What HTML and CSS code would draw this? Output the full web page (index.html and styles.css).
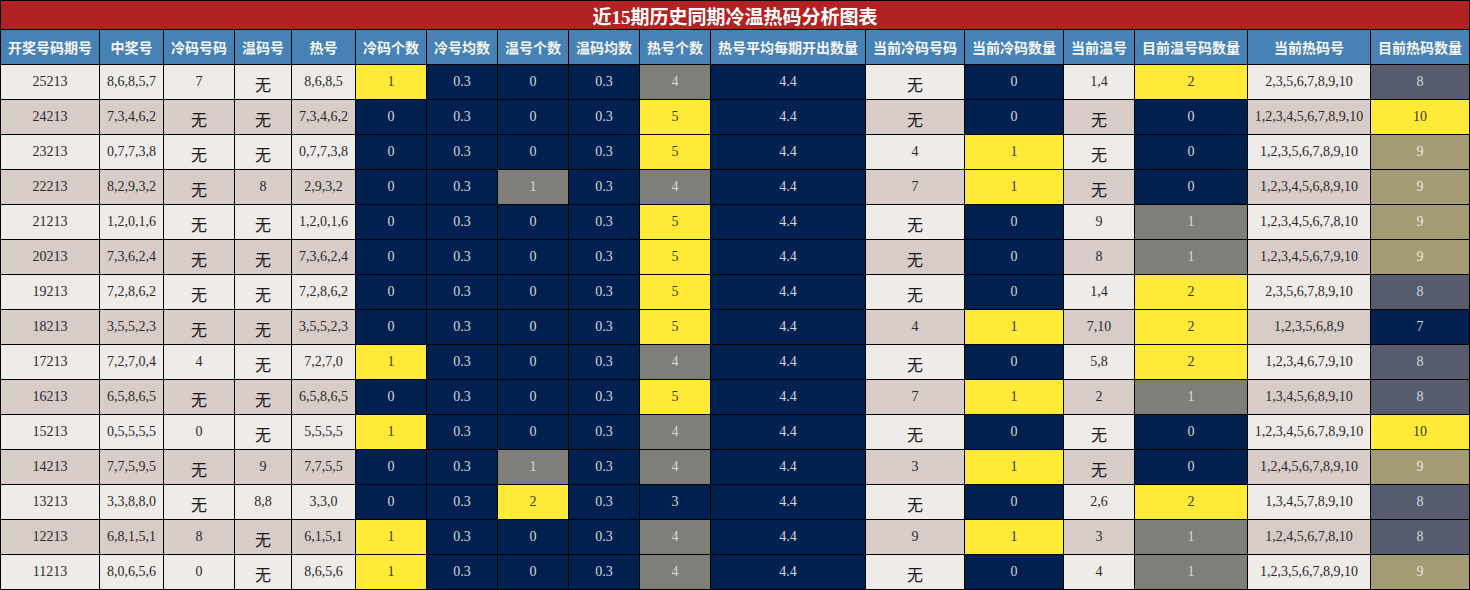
FILE: index.html
```html
<!DOCTYPE html>
<html lang="zh-CN">
<head>
<meta charset="utf-8">
<title>近15期历史同期冷温热码分析图表</title>
<link rel="stylesheet" href="styles.css">
</head>
<body>
<div class="sheet">
  <div class="title">近15期历史同期冷温热码分析图表</div>
  <div class="grid">
    <div class="row head">
      <div class="c">开奖号码期号</div><div class="c">中奖号</div><div class="c">冷码号码</div><div class="c">温码号</div><div class="c">热号</div><div class="c">冷码个数</div><div class="c">冷号均数</div><div class="c">温号个数</div><div class="c">温码均数</div><div class="c">热号个数</div><div class="c">热号平均每期开出数量</div><div class="c">当前冷码号码</div><div class="c">当前冷码数量</div><div class="c">当前温号</div><div class="c">目前温号码数量</div><div class="c">当前热码号</div><div class="c">目前热码数量</div>
    </div>
    <div class="row l">
      <div class="c">25213</div><div class="c">8,6,8,5,7</div><div class="c">7</div><div class="c w">无</div><div class="c">8,6,8,5</div><div class="c y">1</div><div class="c n">0.3</div><div class="c n">0</div><div class="c n">0.3</div><div class="c g">4</div><div class="c n">4.4</div><div class="c w">无</div><div class="c n">0</div><div class="c">1,4</div><div class="c y">2</div><div class="c">2,3,5,6,7,8,9,10</div><div class="c s">8</div>
    </div>
    <div class="row d">
      <div class="c">24213</div><div class="c">7,3,4,6,2</div><div class="c w">无</div><div class="c w">无</div><div class="c">7,3,4,6,2</div><div class="c n">0</div><div class="c n">0.3</div><div class="c n">0</div><div class="c n">0.3</div><div class="c y">5</div><div class="c n">4.4</div><div class="c w">无</div><div class="c n">0</div><div class="c w">无</div><div class="c n">0</div><div class="c">1,2,3,4,5,6,7,8,9,10</div><div class="c y">10</div>
    </div>
    <div class="row l">
      <div class="c">23213</div><div class="c">0,7,7,3,8</div><div class="c w">无</div><div class="c w">无</div><div class="c">0,7,7,3,8</div><div class="c n">0</div><div class="c n">0.3</div><div class="c n">0</div><div class="c n">0.3</div><div class="c y">5</div><div class="c n">4.4</div><div class="c">4</div><div class="c y">1</div><div class="c w">无</div><div class="c n">0</div><div class="c">1,2,3,5,6,7,8,9,10</div><div class="c o">9</div>
    </div>
    <div class="row d">
      <div class="c">22213</div><div class="c">8,2,9,3,2</div><div class="c w">无</div><div class="c">8</div><div class="c">2,9,3,2</div><div class="c n">0</div><div class="c n">0.3</div><div class="c g">1</div><div class="c n">0.3</div><div class="c g">4</div><div class="c n">4.4</div><div class="c">7</div><div class="c y">1</div><div class="c w">无</div><div class="c n">0</div><div class="c">1,2,3,4,5,6,8,9,10</div><div class="c o">9</div>
    </div>
    <div class="row l">
      <div class="c">21213</div><div class="c">1,2,0,1,6</div><div class="c w">无</div><div class="c w">无</div><div class="c">1,2,0,1,6</div><div class="c n">0</div><div class="c n">0.3</div><div class="c n">0</div><div class="c n">0.3</div><div class="c y">5</div><div class="c n">4.4</div><div class="c w">无</div><div class="c n">0</div><div class="c">9</div><div class="c g">1</div><div class="c">1,2,3,4,5,6,7,8,10</div><div class="c o">9</div>
    </div>
    <div class="row d">
      <div class="c">20213</div><div class="c">7,3,6,2,4</div><div class="c w">无</div><div class="c w">无</div><div class="c">7,3,6,2,4</div><div class="c n">0</div><div class="c n">0.3</div><div class="c n">0</div><div class="c n">0.3</div><div class="c y">5</div><div class="c n">4.4</div><div class="c w">无</div><div class="c n">0</div><div class="c">8</div><div class="c g">1</div><div class="c">1,2,3,4,5,6,7,9,10</div><div class="c o">9</div>
    </div>
    <div class="row l">
      <div class="c">19213</div><div class="c">7,2,8,6,2</div><div class="c w">无</div><div class="c w">无</div><div class="c">7,2,8,6,2</div><div class="c n">0</div><div class="c n">0.3</div><div class="c n">0</div><div class="c n">0.3</div><div class="c y">5</div><div class="c n">4.4</div><div class="c w">无</div><div class="c n">0</div><div class="c">1,4</div><div class="c y">2</div><div class="c">2,3,5,6,7,8,9,10</div><div class="c s">8</div>
    </div>
    <div class="row d">
      <div class="c">18213</div><div class="c">3,5,5,2,3</div><div class="c w">无</div><div class="c w">无</div><div class="c">3,5,5,2,3</div><div class="c n">0</div><div class="c n">0.3</div><div class="c n">0</div><div class="c n">0.3</div><div class="c y">5</div><div class="c n">4.4</div><div class="c">4</div><div class="c y">1</div><div class="c">7,10</div><div class="c y">2</div><div class="c">1,2,3,5,6,8,9</div><div class="c n">7</div>
    </div>
    <div class="row l">
      <div class="c">17213</div><div class="c">7,2,7,0,4</div><div class="c">4</div><div class="c w">无</div><div class="c">7,2,7,0</div><div class="c y">1</div><div class="c n">0.3</div><div class="c n">0</div><div class="c n">0.3</div><div class="c g">4</div><div class="c n">4.4</div><div class="c w">无</div><div class="c n">0</div><div class="c">5,8</div><div class="c y">2</div><div class="c">1,2,3,4,6,7,9,10</div><div class="c s">8</div>
    </div>
    <div class="row d">
      <div class="c">16213</div><div class="c">6,5,8,6,5</div><div class="c w">无</div><div class="c w">无</div><div class="c">6,5,8,6,5</div><div class="c n">0</div><div class="c n">0.3</div><div class="c n">0</div><div class="c n">0.3</div><div class="c y">5</div><div class="c n">4.4</div><div class="c">7</div><div class="c y">1</div><div class="c">2</div><div class="c g">1</div><div class="c">1,3,4,5,6,8,9,10</div><div class="c s">8</div>
    </div>
    <div class="row l">
      <div class="c">15213</div><div class="c">0,5,5,5,5</div><div class="c">0</div><div class="c w">无</div><div class="c">5,5,5,5</div><div class="c y">1</div><div class="c n">0.3</div><div class="c n">0</div><div class="c n">0.3</div><div class="c g">4</div><div class="c n">4.4</div><div class="c w">无</div><div class="c n">0</div><div class="c w">无</div><div class="c n">0</div><div class="c">1,2,3,4,5,6,7,8,9,10</div><div class="c y">10</div>
    </div>
    <div class="row d">
      <div class="c">14213</div><div class="c">7,7,5,9,5</div><div class="c w">无</div><div class="c">9</div><div class="c">7,7,5,5</div><div class="c n">0</div><div class="c n">0.3</div><div class="c g">1</div><div class="c n">0.3</div><div class="c g">4</div><div class="c n">4.4</div><div class="c">3</div><div class="c y">1</div><div class="c w">无</div><div class="c n">0</div><div class="c">1,2,4,5,6,7,8,9,10</div><div class="c o">9</div>
    </div>
    <div class="row l">
      <div class="c">13213</div><div class="c">3,3,8,8,0</div><div class="c w">无</div><div class="c">8,8</div><div class="c">3,3,0</div><div class="c n">0</div><div class="c n">0.3</div><div class="c y">2</div><div class="c n">0.3</div><div class="c n">3</div><div class="c n">4.4</div><div class="c w">无</div><div class="c n">0</div><div class="c">2,6</div><div class="c y">2</div><div class="c">1,3,4,5,7,8,9,10</div><div class="c s">8</div>
    </div>
    <div class="row d">
      <div class="c">12213</div><div class="c">6,8,1,5,1</div><div class="c">8</div><div class="c w">无</div><div class="c">6,1,5,1</div><div class="c y">1</div><div class="c n">0.3</div><div class="c n">0</div><div class="c n">0.3</div><div class="c g">4</div><div class="c n">4.4</div><div class="c">9</div><div class="c y">1</div><div class="c">3</div><div class="c g">1</div><div class="c">1,2,4,5,6,7,8,10</div><div class="c s">8</div>
    </div>
    <div class="row l">
      <div class="c">11213</div><div class="c">8,0,6,5,6</div><div class="c">0</div><div class="c w">无</div><div class="c">8,6,5,6</div><div class="c y">1</div><div class="c n">0.3</div><div class="c n">0</div><div class="c n">0.3</div><div class="c g">4</div><div class="c n">4.4</div><div class="c w">无</div><div class="c n">0</div><div class="c">4</div><div class="c g">1</div><div class="c">1,2,3,5,6,7,8,9,10</div><div class="c o">9</div>
    </div>
  </div>
</div>
</body>
</html>
```

FILE: styles.css
```css
html, body {
  margin: 0;
  padding: 0;
  background: #ffffff;
}

.sheet {
  width: 1470px;
  box-sizing: border-box;
  background: #000000;
  padding: 1px;
  display: flex;
  flex-direction: column;
  gap: 1px;
}

.title {
  height: 28px;
  background: #b22222;
  color: #ffffff;
  font-family: "Liberation Serif", "Noto Sans CJK SC", serif;
  font-weight: bold;
  font-size: 19px;
  display: flex;
  align-items: center;
  justify-content: center;
  padding-top: 1px;
  box-sizing: border-box;
}

.grid {
  display: grid;
  grid-template-columns: 98px 63px 70px 56px 63px 70px 70px 70px 70px 70px 154px 98px 98px 70px 112px 122px 98px;
  grid-auto-rows: 34px;
  gap: 1px;
}

.row {
  display: contents;
}

.c {
  display: flex;
  align-items: center;
  justify-content: center;
  font-family: "Liberation Serif", "Noto Sans CJK SC", serif;
  font-size: 14px;
  color: #2a2a2a;
  white-space: nowrap;
  overflow: hidden;
}

.head .c {
  background: #4682b4;
  color: #f6f6f6;
  font-family: "Noto Sans CJK SC", "Noto Sans", sans-serif;
  font-weight: bold;
  font-size: 14px;
}

.l .c {
  background: #efebe8;
}

.d .c {
  background: #d7ccc8;
}

.c.w {
  font-family: "Noto Sans CJK SC", sans-serif;
  font-size: 16px;
  color: #1a1a1a;
  padding-top: 3px;
  box-sizing: border-box;
}

.row .c.n {
  background: #00214f;
  color: #d4d8de;
}

.row .c.y {
  background: #ffea38;
  color: #3a3a2a;
}

.row .c.g {
  background: #7f7e79;
  color: #d8d8d6;
}

.row .c.s {
  background: #565c6d;
  color: #d6d8dc;
}

.row .c.o {
  background: #a39b72;
  color: #ebe8de;
}
```
